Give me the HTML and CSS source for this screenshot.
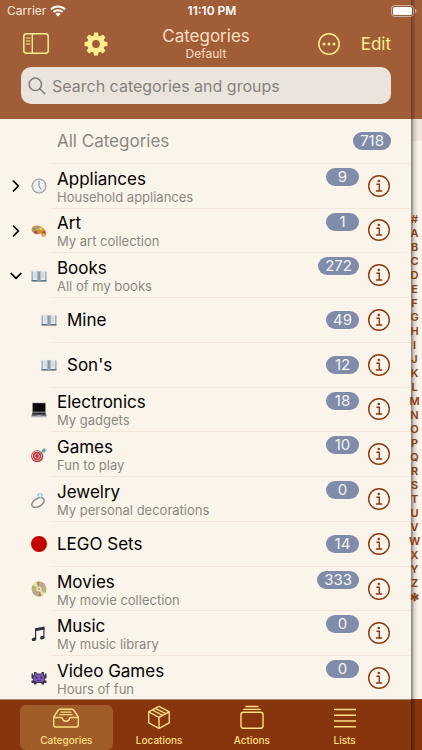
FILE: index.html
```html
<!DOCTYPE html>
<html lang="en">
<head>
    <meta charset="UTF-8">
    <meta name="viewport" content="width=device-width, initial-scale=1">
    <title>Categories</title>
    <link rel="stylesheet" href="styles.css">
</head>
<body>
    <!-- Shared icons -->
    <svg class="sprite" aria-hidden="true">
        <symbol id="info" viewBox="0 0 22 22">
            <circle cx="11" cy="11" r="10.3" fill="none" stroke="currentColor" stroke-width="1.4"/>
            <circle cx="10.8" cy="6" r="1.3" fill="currentColor"/>
            <path d="M8.4 9.3h2.9v6.6M7.9 16h6.3" fill="none" stroke="currentColor" stroke-width="1.4"/>
        </symbol>
        <symbol id="chevron" viewBox="0 0 12 12">
            <path d="M3.5 1.2 8.4 6 3.5 10.8" fill="none" stroke="currentColor" stroke-width="1.7" stroke-linecap="round" stroke-linejoin="round"/>
        </symbol>
        <symbol id="book" viewBox="0 0 16 16">
            <path d="M.6 3.5h14.8v9.8H.6z" fill="#6b8fae"/>
            <path d="M.6 12.4h14.8v1H.6z" fill="#3b566c"/>
            <path d="M1.6 2.6C4 2.2 6.4 2.3 8 3.4c1.6-1.1 4-1.2 6.4-.8v9.6c-2.4-.5-4.8-.4-6.4.6-1.6-1-4-1.1-6.4-.6z" fill="#e6e9eb"/>
            <path d="M6 3c.9 0 1.5.3 2 .7v9c-.6-.5-1.2-.7-2-.8zM10 3c-.9 0-1.5.3-2 .7v9c.6-.5 1.2-.7 2-.8z" fill="#b0b9c2"/>
            <path d="M8 3.5v9.3" stroke="#59636c" stroke-width=".7"/>
            <path d="M3 5h2.5M3 7h2.5M3 9h2.5M10.5 5H13M10.5 7H13M10.5 9H13" stroke="#b4babf" stroke-width=".6"/>
        </symbol>
    </svg>

    <div class="screen">
        <div class="statusbar">
            <div class="carrier">
                <span>Carrier</span>
                <svg width="16" height="12" viewBox="0 0 16 12">
                    <path d="M1 4.400a10 10 0 0 1 14 0M3.400 7a6.600 6.600 0 0 1 9.200 0" fill="none" stroke="#fff" stroke-width="2"/>
                    <path d="M5.400 9a3.700 3.700 0 0 1 5.200 0L8 11.600z" fill="#fff"/>
                </svg>
            </div>
            <span class="clock">11:10 PM</span>
            <svg class="battery" width="26" height="12" viewBox="0 0 26 12">
                <rect x=".5" y=".5" width="22" height="11" rx="3" fill="none" stroke="#fff" stroke-opacity=".5"/>
                <rect x="2" y="2" width="19" height="8" rx="1.5" fill="#fff"/>
                <path d="M24 4v4c1-.3 1.500-1 1.500-2S25 4.300 24 4z" fill="#fff" fill-opacity=".5"/>
            </svg>
        </div>

        <main class="panel">
            <header class="header">
                <div class="nav">
                    <div class="nav-left">
                        <button class="icon-btn" aria-label="Sidebar">
                            <svg width="26" height="21" viewBox="0 0 26 21" fill="none" stroke="currentColor">
                                <rect x=".8" y=".8" width="24.4" height="19.4" rx="2.6" stroke-width="1.5"/>
                                <path d="M9.3 1v19" stroke-width="1.4"/>
                                <path d="M3.400 5h3.400M3.400 8h3.400M3.400 11h3.400" stroke-width="1.2" stroke-linecap="round"/>
                            </svg>
                        </button>
                        <button class="icon-btn" aria-label="Settings">
                            <svg width="24" height="24" viewBox="-12 -12 24 24">
                                <g fill="currentColor">
                                    <path d="M-2.700-7-1.900-11.400h3.800L2.700-7zM-2.700 7l.8 4.400h3.800L2.700 7z"/>
                                    <path d="M-2.700-7-1.900-11.400h3.800L2.700-7zM-2.700 7l.8 4.400h3.800L2.700 7z" transform="rotate(45)"/>
                                    <path d="M-2.700-7-1.900-11.400h3.800L2.700-7zM-2.700 7l.8 4.400h3.800L2.700 7z" transform="rotate(90)"/>
                                    <path d="M-2.700-7-1.900-11.400h3.800L2.700-7zM-2.700 7l.8 4.400h3.800L2.700 7z" transform="rotate(135)"/>
                                </g>
                                <circle r="6.3" fill="none" stroke="currentColor" stroke-width="4.8"/>
                            </svg>
                        </button>
                    </div>
                    <div class="nav-title">
                        <h1>Categories</h1>
                        <p>Default</p>
                    </div>
                    <div class="nav-right">
                        <button class="icon-btn" aria-label="More">
                            <svg width="22" height="22" viewBox="0 0 22 22">
                                <circle cx="11" cy="11" r="10.2" fill="none" stroke="currentColor" stroke-width="1.5"/>
                                <g fill="currentColor"><circle cx="6" cy="11" r="1.5"/><circle cx="11" cy="11" r="1.5"/><circle cx="16" cy="11" r="1.5"/></g>
                            </svg>
                        </button>
                        <button class="edit-btn">Edit</button>
                    </div>
                </div>
                <label class="search">
                    <svg width="18" height="18" viewBox="0 0 18 18" fill="none" stroke="currentColor" stroke-width="1.5" stroke-linecap="round">
                        <circle cx="7.3" cy="7.3" r="6.2"/>
                        <path d="m11.8 11.8 5 5"/>
                    </svg>
                    <input type="search" placeholder="Search categories and groups" aria-label="Search categories and groups">
                </label>
            </header>

            <ul class="list">
                <li class="row all">
                    <div class="row-body">
                        <div class="text"><span class="name">All Categories</span></div>
                        <span class="badge">718</span>
                    </div>
                </li>
                <li class="row">
                    <button class="toggle" aria-label="Expand Appliances"><svg width="12" height="12"><use href="#chevron"/></svg></button>
                    <svg class="icon" viewBox="0 0 16 16">
                        <circle cx="8" cy="8" r="7.5" fill="#8c8f94"/>
                        <circle cx="8" cy="8" r="6.8" fill="#c9ccd0"/>
                        <circle cx="8" cy="8" r="5.9" fill="#f1f2f3"/>
                        <path d="M8 2.500v1M8 12.500v1M2.500 8h1M12.500 8h1" stroke="#999" stroke-width=".6"/>
                        <path d="M8 3v5l2 3.600" fill="none" stroke="#777c82" stroke-width=".9"/>
                    </svg>
                    <div class="row-body">
                        <div class="text"><span class="name">Appliances</span><span class="note">Household appliances</span></div>
                        <span class="badge">9</span>
                        <button class="info" aria-label="Info"><svg width="22" height="22"><use href="#info"/></svg></button>
                    </div>
                </li>
                <li class="row">
                    <button class="toggle" aria-label="Expand Art"><svg width="12" height="12"><use href="#chevron"/></svg></button>
                    <svg class="icon" viewBox="0 0 16 16">
                        <path d="M.6 6.500C.8 3.200 4.500 1.800 8.200 2.900c4.600 1.300 7.600 5 7 8.200-.4 2.300-2.600 3.300-3.900 2.400-1-.7-.3-2-1.300-2.700-1.200-.8-2.100 1-4.300.5C2.800 10.700.5 9 .6 6.500z" fill="#cf8a35"/>
                        <path d="M1.200 6.200C1.700 3.900 4.700 2.700 8 3.600c3.600 1 6 3.300 6.500 5.700-1.200-2-3.500-1.500-5-2.200C6.800 6 3 8.800 1.200 6.200z" fill="#e5a94f"/>
                        <circle cx="3.3" cy="5.9" r="1.3" fill="#4da95a"/>
                        <circle cx="6.5" cy="4.7" r="1.3" fill="#4b9fd0"/>
                        <circle cx="10" cy="5.9" r="1.3" fill="#e8d33d"/>
                        <circle cx="12.9" cy="9.3" r="1.2" fill="#d43b32"/>
                        <circle cx="4.9" cy="9.2" r="1.3" fill="#8b3d9a"/>
                        <ellipse cx="12.6" cy="11.8" rx=".9" ry=".7" fill="#fbf4ea"/>
                    </svg>
                    <div class="row-body">
                        <div class="text"><span class="name">Art</span><span class="note">My art collection</span></div>
                        <span class="badge">1</span>
                        <button class="info" aria-label="Info"><svg width="22" height="22"><use href="#info"/></svg></button>
                    </div>
                </li>
                <li class="row">
                    <button class="toggle open" aria-label="Collapse Books"><svg width="12" height="12"><use href="#chevron"/></svg></button>
                    <svg class="icon"><use href="#book"/></svg>
                    <div class="row-body">
                        <div class="text"><span class="name">Books</span><span class="note">All of my books</span></div>
                        <span class="badge">272</span>
                        <button class="info" aria-label="Info"><svg width="22" height="22"><use href="#info"/></svg></button>
                    </div>
                </li>
                <li class="row child">
                    <svg class="icon"><use href="#book"/></svg>
                    <div class="row-body">
                        <div class="text"><span class="name">Mine</span></div>
                        <span class="badge">49</span>
                        <button class="info" aria-label="Info"><svg width="22" height="22"><use href="#info"/></svg></button>
                    </div>
                </li>
                <li class="row child">
                    <svg class="icon"><use href="#book"/></svg>
                    <div class="row-body">
                        <div class="text"><span class="name">Son's</span></div>
                        <span class="badge">12</span>
                        <button class="info" aria-label="Info"><svg width="22" height="22"><use href="#info"/></svg></button>
                    </div>
                </li>
                <li class="row">
                    <svg class="icon" viewBox="0 0 16 16">
                        <path d="M1.300.8h13.400v9.400H1.300z" fill="#77787a"/>
                        <path d="M1.900 1.300h12.200v8.200H1.900z" fill="#090909"/>
                        <path d="M1.300 10.200h13.400l1 4.300H.3z" fill="#6d6f72"/>
                        <path d="M2 10.700h12l.4 1.900H1.600z" fill="#292a2c"/>
                        <path d="M.3 14.500h15.400v.9H.3z" fill="#bfc0c2"/>
                        <path d="M5.800 13h4.400l.2 1.200H5.600z" fill="#a2a3a6"/>
                    </svg>
                    <div class="row-body">
                        <div class="text"><span class="name">Electronics</span><span class="note">My gadgets</span></div>
                        <span class="badge">18</span>
                        <button class="info" aria-label="Info"><svg width="22" height="22"><use href="#info"/></svg></button>
                    </div>
                </li>
                <li class="row">
                    <svg class="icon" viewBox="0 0 16 16">
                        <circle cx="6.2" cy="9.3" r="6" fill="#b52e35"/>
                        <circle cx="6" cy="9" r="4.9" fill="#eadfdf"/>
                        <circle cx="6" cy="9" r="4.2" fill="#cb3039"/>
                        <circle cx="6" cy="9" r="2.6" fill="#eadfdf"/>
                        <circle cx="6" cy="9" r="1.9" fill="#cb3039"/>
                        <path d="m6 9 6.500-5" stroke="#61767f" stroke-width=".9"/>
                        <path d="m10.600 5.600.5-2.700 2.500-2.100.3 1.700 1.900.3-2.200 2.500z" fill="#57a5b5"/>
                    </svg>
                    <div class="row-body">
                        <div class="text"><span class="name">Games</span><span class="note">Fun to play</span></div>
                        <span class="badge">10</span>
                        <button class="info" aria-label="Info"><svg width="22" height="22"><use href="#info"/></svg></button>
                    </div>
                </li>
                <li class="row">
                    <svg class="icon" viewBox="0 0 16 16">
                        <ellipse cx="7" cy="10.5" rx="6.8" ry="4" transform="rotate(-32 7 10.500)" fill="none" stroke="#858b8f" stroke-width="1.4"/>
                        <path d="m5.800 3 1.600-1.800h3.400L12.400 3 9.300 6.400z" fill="#9fcede"/>
                        <path d="m7.800 2.900 1.300-1.500 1.300 1.500-1.200 2.500z" fill="#e2f2f7"/>
                    </svg>
                    <div class="row-body">
                        <div class="text"><span class="name">Jewelry</span><span class="note">My personal decorations</span></div>
                        <span class="badge">0</span>
                        <button class="info" aria-label="Info"><svg width="22" height="22"><use href="#info"/></svg></button>
                    </div>
                </li>
                <li class="row">
                    <svg class="icon" viewBox="0 0 16 16"><circle cx="8" cy="8" r="8" fill="#c20000"/></svg>
                    <div class="row-body">
                        <div class="text"><span class="name">LEGO Sets</span></div>
                        <span class="badge">14</span>
                        <button class="info" aria-label="Info"><svg width="22" height="22"><use href="#info"/></svg></button>
                    </div>
                </li>
                <li class="row">
                    <svg class="icon" viewBox="0 0 16 16">
                        <circle cx="8" cy="8" r="7.4" fill="#c9b170"/>
                        <path d="M8 8 1.600 4.300A7.400 7.400 0 0 1 5.500 1zM8 8l6.400 3.700a7.400 7.400 0 0 1-3.900 3.300z" fill="#e3e29c"/>
                        <path d="M8 8 10.500 1a7.400 7.400 0 0 1 3.900 3.300zM8 8l-2.500 7a7.400 7.400 0 0 1-3.900-3.300z" fill="#b8a2a0"/>
                        <path d="M8 8 5.500 1a7.400 7.400 0 0 1 3-.4zM8 8l2.500 7a7.400 7.400 0 0 1-3 .4z" fill="#a38c5c"/>
                        <path d="M8 8 .6 7.500a7 7 0 0 1 1-3.200zM8 8l7.400.5a7 7 0 0 1-1 3.200z" fill="#a9b671"/>
                        <circle cx="8" cy="8" r="2.6" fill="#e8e2d2"/>
                        <circle cx="8" cy="8" r="1.1" fill="#b3a384"/>
                    </svg>
                    <div class="row-body">
                        <div class="text"><span class="name">Movies</span><span class="note">My movie collection</span></div>
                        <span class="badge">333</span>
                        <button class="info" aria-label="Info"><svg width="22" height="22"><use href="#info"/></svg></button>
                    </div>
                </li>
                <li class="row">
                    <svg class="icon" viewBox="0 0 16 16" fill="#28323a">
                        <path d="M4 2.300 13.500.6v3L4 5.300z"/>
                        <path d="M4 3h1.200v10H4zM12.300 2h1.200v9.500h-1.200z"/>
                        <ellipse cx="3" cy="13.3" rx="2.3" ry="1.7" transform="rotate(-15 3 13.300)"/>
                        <ellipse cx="11.3" cy="11.7" rx="2.3" ry="1.7" transform="rotate(-15 11.300 11.700)"/>
                    </svg>
                    <div class="row-body">
                        <div class="text"><span class="name">Music</span><span class="note">My music library</span></div>
                        <span class="badge">0</span>
                        <button class="info" aria-label="Info"><svg width="22" height="22"><use href="#info"/></svg></button>
                    </div>
                </li>
                <li class="row">
                    <svg class="icon" viewBox="0 0 16 16">
                        <path d="M3 2h2.500v1.500h5V2H13v2.500l1 1V3.500h1.500V8l-1.500 1v1.500h1.500V13H13v1.500h-2.500V13h-5v1.500H3V13H.5v-2.500H2V9L.5 8V3.500H2v2l1-1z" fill="#3c3150"/>
                        <path d="M4 3h1.100v1.500h5.800V3H12v2.300l1.300 1.400v3.600l-2 1.700H4.700l-2-1.700V6.700L4 5.300z" fill="#7a5ab5"/>
                        <path d="M5 6.800h1.500v1.700H5zM9.500 6.800H11v1.700H9.500z" fill="#35234f"/>
                        <path d="M5.800 10.200h4.400v.8H5.800z" fill="#4a3474"/>
                    </svg>
                    <div class="row-body">
                        <div class="text"><span class="name">Video Games</span><span class="note">Hours of fun</span></div>
                        <span class="badge">0</span>
                        <button class="info" aria-label="Info"><svg width="22" height="22"><use href="#info"/></svg></button>
                    </div>
                </li>
            </ul>

            <nav class="tabs">
                <a class="tab active" href="#categories">
                    <svg width="28" height="24" viewBox="0 0 28 24" fill="none" stroke="currentColor" stroke-width="1.4" stroke-linejoin="round" stroke-linecap="round">
                        <path d="M1.700 12 6 5.500c.5-.8 1.200-1.200 2-1.200h12c.8 0 1.500.4 2 1.200l4.300 6.500v8c0 1.300-.8 2-2 2H3.700c-1.200 0-2-.7-2-2z"/>
                        <path d="M1.700 12.500h7.800c.9 0 .9.600 1 1.200.3 1.600 1.700 2.600 3.500 2.600s3.200-1 3.500-2.600c.1-.6.1-1.200 1-1.200h7.800"/>
                        <path d="M9 7.200h10M7.800 9.700h12.400" stroke-width="1.2"/>
                    </svg>
                    <span>Categories</span>
                </a>
                <a class="tab" href="#locations">
                    <svg width="28" height="24" viewBox="0 0 28 24" fill="none" stroke="currentColor" stroke-width="1.4" stroke-linejoin="round" stroke-linecap="round">
                        <path d="M14 1.300 24.300 6.900v11L14 23.300 3.700 17.900v-11z"/>
                        <path d="M3.700 6.900 14 12.300l10.300-5.400M14 12.300v11M7.300 5l10.500 5.300M10.300 3.400l10.500 5.300"/>
                    </svg>
                    <span>Locations</span>
                </a>
                <a class="tab" href="#actions">
                    <svg width="28" height="24" viewBox="0 0 28 24" fill="none" stroke="currentColor" stroke-width="1.4" stroke-linecap="round">
                        <rect x="3" y="7.3" width="22" height="16" rx="2.5"/>
                        <path d="M5.700 4.400h16.600M8 1.500h12"/>
                    </svg>
                    <span>Actions</span>
                </a>
                <a class="tab" href="#lists">
                    <svg width="28" height="24" viewBox="0 0 28 24" fill="none" stroke="currentColor" stroke-width="1.5">
                        <path d="M3 4.500h22M3 10.200h22M3 16h22M3 21.700h22"/>
                    </svg>
                    <span>Lists</span>
                </a>
            </nav>
        </main>

        <!-- Edge of the page behind the panel -->
        <aside class="behind">
            <div class="behind-header"></div>
            <div class="behind-section"></div>
            <ol class="index">
                <li>#</li><li>A</li><li>B</li><li>C</li><li>D</li><li>E</li><li>F</li>
                <li>G</li><li>H</li><li>I</li><li>J</li><li>K</li><li>L</li><li>M</li>
                <li>N</li><li>O</li><li>P</li><li>Q</li><li>R</li><li>S</li><li>T</li>
                <li>U</li><li>V</li><li>W</li><li>X</li><li>Y</li><li>Z</li><li>✻</li>
            </ol>
            <div class="behind-footer"></div>
        </aside>
    </div>
</body>
</html>
```

FILE: styles.css
```css
* {
    box-sizing: border-box;
}

body {
    margin: 0;
    font-family: Inter, "Liberation Sans", sans-serif;
    background-color: #fbf4ea;
    color: #000;
}

h1, p, ul, ol {
    margin: 0;
    padding: 0;
    font-weight: normal;
    list-style: none;
}

button {
    padding: 0;
    border: none;
    background: none;
    color: inherit;
    font: inherit;
    cursor: pointer;
}

svg {
    display: block;
    flex-shrink: 0;
}

.sprite {
    position: absolute;
    width: 0;
    height: 0;
}

.screen {
    position: relative;
    display: grid;
    grid-template-columns: 1fr 11px;
    min-height: 100vh;
}

/* Status bar, lies over both pages */
.statusbar {
    position: absolute;
    z-index: 2;
    top: 0;
    left: 0;
    right: 0;
    display: grid;
    grid-template-columns: 1fr auto 1fr;
    align-items: center;
    height: 21px;
    padding: 0 5px 0 7px;
    color: #fff;
    font-size: 12px;
}

.carrier {
    display: flex;
    align-items: center;
    gap: 4px;
    color: #fbe9da;
}

.clock {
    font-weight: 600;
}

.battery {
    justify-self: end;
}

.panel {
    display: flex;
    flex-direction: column;
    min-width: 0;
}

/* Header */
.header {
    padding: 20px 20px 15px 21px;
    background-color: #a15d37;
    color: #ffee90;
}

.nav {
    display: grid;
    grid-template-columns: 1fr auto 1fr;
    align-items: center;
    height: 47px;
}

.nav-left, .nav-right {
    display: flex;
    align-items: center;
}

.nav-left {
    gap: 35px;
    padding-left: 2px;
}

.nav-right {
    justify-content: flex-end;
    gap: 21px;
}

.nav-title {
    text-align: center;
    color: #fbdfc2;
}

.nav-title h1 {
    font-size: 17px;
    line-height: 19px;
}

.nav-title p {
    font-size: 12px;
    line-height: 15px;
}

.edit-btn {
    font-size: 17px;
}

.search {
    display: flex;
    align-items: center;
    gap: 6px;
    height: 37px;
    padding: 0 7px;
    border-radius: 10px;
    background-color: #ebe4dc;
    color: #7f7b78;
}

.search input {
    flex: 1;
    min-width: 0;
    padding: 0;
    border: none;
    outline: none;
    background: none;
    font-family: inherit;
    font-size: 16px;
}

.search input::placeholder {
    color: #85817e;
}

/* Category list */
.list {
    flex: 1;
    display: flex;
    flex-direction: column;
    background-color: #fbf4ea;
}

.row {
    flex: 24 0 0;
    display: grid;
    grid-template-columns: 22px 16px 1fr;
    column-gap: 4px;
    padding-left: 5px;
}

/* No divider under the last row, so it is a little shorter */
.row:last-child {
    flex-grow: 23;
}

.row > * {
    align-self: center;
}

.toggle {
    grid-column: 1;
    justify-self: center;
}

.toggle.open svg {
    transform: rotate(90deg);
}

.icon {
    grid-column: 2;
    width: 16px;
    height: 16px;
}

.row .row-body {
    grid-column: 3;
    align-self: stretch;
    display: flex;
    align-items: center;
    padding: 0 21px 0 6px;
    border-bottom: 1px solid #f4e6d8;
}

.row:last-child .row-body {
    border-bottom: none;
}

.child .icon {
    margin-left: 10px;
}

.row.child .row-body {
    padding-left: 16px;
}

.text {
    flex: 1;
    display: flex;
    flex-direction: column;
    padding-top: 2px;
}

.name {
    font-size: 17px;
    line-height: 21px;
}

.note {
    color: #8b8783;
    font-size: 13px;
    line-height: 15px;
}

.all .name {
    color: #8b8783;
}

.row.all .row-body {
    padding-right: 20px;
}

.badge {
    min-width: 33px;
    padding: 0 7px;
    border-radius: 9px;
    background-color: #7f8caa;
    color: #f5f3f2;
    font-size: 15px;
    line-height: 18px;
    text-align: center;
}

/* Rows with a note carry the badge on the first line */
.text:has(.note) + .badge {
    align-self: flex-start;
    margin-top: 4px;
}

.info {
    margin-left: 9px;
    color: #8b3a10;
}

/* Tab bar */
.tabs {
    display: grid;
    grid-template-columns: repeat(4, 1fr);
    padding: 5px 20px 0;
    border-top: 1px solid #b08a70;
    background-color: #87350c;
}

.tab {
    display: flex;
    flex-direction: column;
    align-items: center;
    gap: 3px;
    height: 45px;
    border-radius: 6px;
    color: #ffdf85;
    font-size: 10px;
    font-weight: 500;
    line-height: 16px;
    text-decoration: none;
}

.tab.active {
    background-color: #a05d28;
}

/* Page behind */
.behind {
    display: flex;
    flex-direction: column;
    background: linear-gradient(to right, #7d7974, #d8d1c8 3px, #fbf4ea 7px);
}

.behind-header {
    height: 119px;
    background: linear-gradient(to right, #6b3d24, #a15d37 5px);
}

.behind-section {
    height: 22px;
    background: linear-gradient(to right, #7d7974, #d0c5bc 3px, #f1e6dc 7px);
}

.behind-footer {
    height: 51px;
    background: linear-gradient(to right, #4a1d07, #87350c 5px);
}

.index {
    flex: 1;
    width: 7px;
    padding-top: 71px;
    color: #8b3a10;
    font-size: 11px;
    font-weight: 600;
    line-height: 14px;
}

.index li {
    display: flex;
    justify-content: center;
}
```
